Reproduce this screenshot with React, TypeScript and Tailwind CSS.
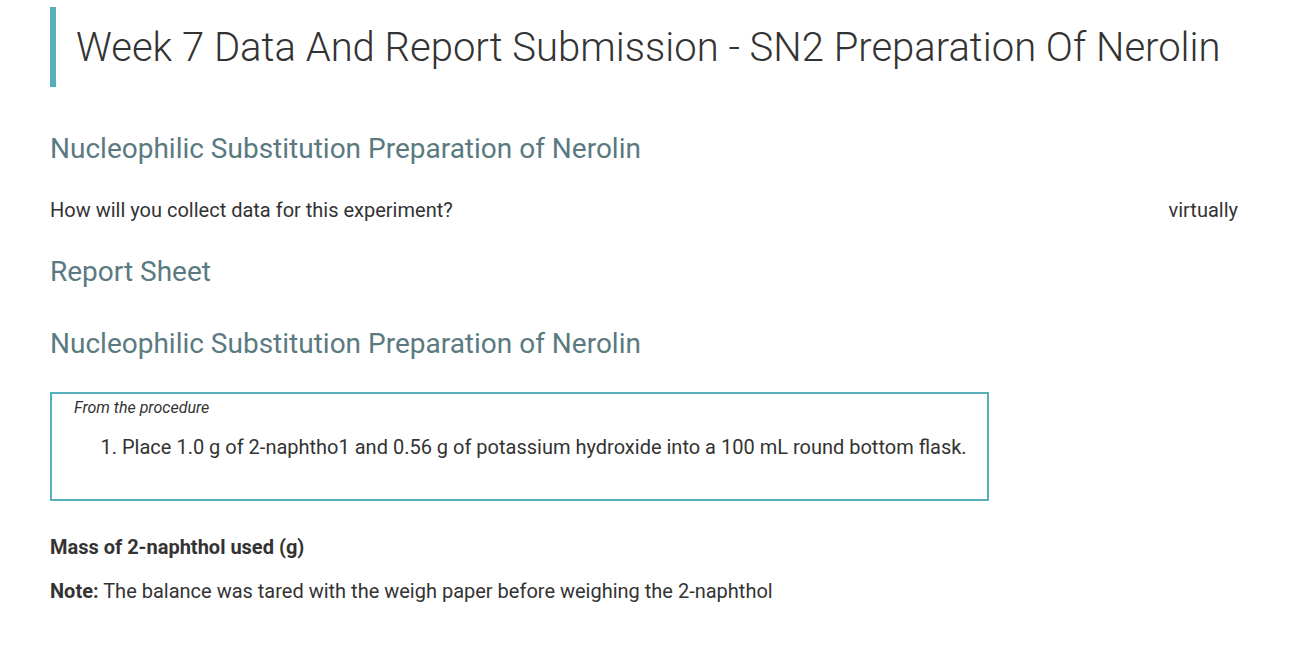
import React from "react";

export default function App() {
  return (
    <div className="min-h-[651px] bg-white text-[#333333]" style={{ fontFamily: "Roboto, 'Liberation Sans', sans-serif" }}>
      <div className="pl-[50px] pr-[63px] pt-[7px]">
        <div className="flex h-[80px] items-center border-l-[6px] border-[#56b0bb] pl-[20px] pt-[2px]">
          <h1 className="text-[40px] font-light leading-none text-[#333333]">
            Week 7 Data And Report Submission - SN2 Preparation Of Nerolin
          </h1>
        </div>

        <h2 className="mt-[44px] text-[28px] leading-[36px] text-[#5a7a80]">
          Nucleophilic Substitution Preparation of Nerolin
        </h2>

        <div className="mt-[30px] flex justify-between text-[20px] leading-[26px]">
          <span>How will you collect data for this experiment?</span>
          <span>virtually</span>
        </div>

        <h2 className="mt-[31px] text-[28px] leading-[36px] text-[#5a7a80]">Report Sheet</h2>

        <h2 className="mt-[36px] text-[28px] leading-[36px] text-[#5a7a80]">
          Nucleophilic Substitution Preparation of Nerolin
        </h2>

        <div className="mt-[30px] h-[109px] w-[939px] border-2 border-[#56b0bb] pl-[22px] pt-[4px]">
          <div className="text-[16px] italic leading-[20px]">From the procedure</div>
          <ol className="mt-[16px] list-decimal pl-[48px] text-[20px] leading-[26px]">
            <li>Place 1.0 g of 2-naphtho1 and 0.56 g of potassium hydroxide into a 100 mL round bottom flask.</li>
          </ol>
        </div>

        <div className="mt-[33px] text-[20px] font-bold leading-[26px]">Mass of 2-naphthol used (g)</div>
        <div className="mt-[18px] text-[20px] leading-[26px]">
          <span className="font-bold">Note:</span> The balance was tared with the weigh paper before weighing the 2-naphthol
        </div>
      </div>
    </div>
  );
}
